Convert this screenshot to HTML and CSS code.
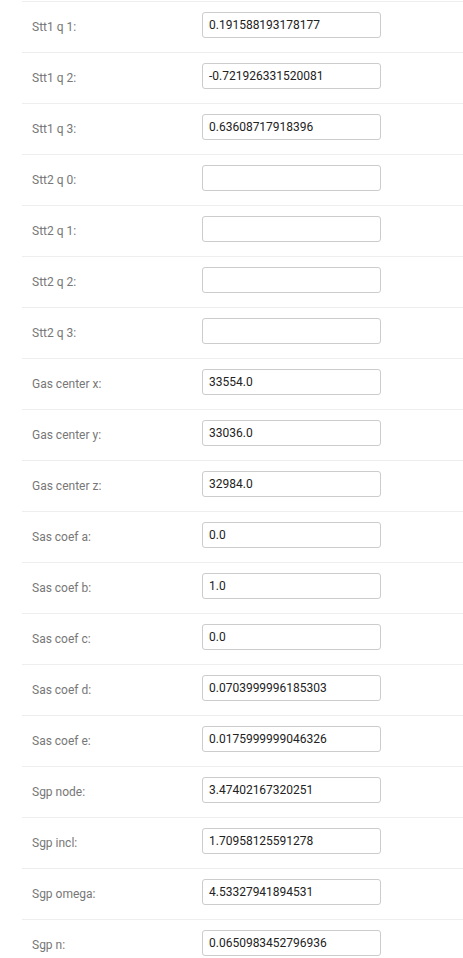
FILE: index.html
```html
<!DOCTYPE html>
<html>
<head>
<meta charset="utf-8">
<link rel="stylesheet" href="styles.css">
</head>
<body>
<div class="list">
  <div class="row"><label class="label">Stt1 q 1:</label><input class="field" type="text" value="0.191588193178177"></div>
  <div class="row"><label class="label">Stt1 q 2:</label><input class="field" type="text" value="-0.721926331520081"></div>
  <div class="row"><label class="label">Stt1 q 3:</label><input class="field" type="text" value="0.63608717918396"></div>
  <div class="row"><label class="label">Stt2 q 0:</label><input class="field" type="text" value=""></div>
  <div class="row"><label class="label">Stt2 q 1:</label><input class="field" type="text" value=""></div>
  <div class="row"><label class="label">Stt2 q 2:</label><input class="field" type="text" value=""></div>
  <div class="row"><label class="label">Stt2 q 3:</label><input class="field" type="text" value=""></div>
  <div class="row"><label class="label">Gas center x:</label><input class="field" type="text" value="33554.0"></div>
  <div class="row"><label class="label">Gas center y:</label><input class="field" type="text" value="33036.0"></div>
  <div class="row"><label class="label">Gas center z:</label><input class="field" type="text" value="32984.0"></div>
  <div class="row"><label class="label">Sas coef a:</label><input class="field" type="text" value="0.0"></div>
  <div class="row"><label class="label">Sas coef b:</label><input class="field" type="text" value="1.0"></div>
  <div class="row"><label class="label">Sas coef c:</label><input class="field" type="text" value="0.0"></div>
  <div class="row"><label class="label">Sas coef d:</label><input class="field" type="text" value="0.0703999996185303"></div>
  <div class="row"><label class="label">Sas coef e:</label><input class="field" type="text" value="0.0175999999046326"></div>
  <div class="row"><label class="label">Sgp node:</label><input class="field" type="text" value="3.47402167320251"></div>
  <div class="row"><label class="label">Sgp incl:</label><input class="field" type="text" value="1.70958125591278"></div>
  <div class="row"><label class="label">Sgp omega:</label><input class="field" type="text" value="4.53327941894531"></div>
  <div class="row"><label class="label">Sgp n:</label><input class="field" type="text" value="0.0650983452796936"></div>
</div>
</body>
</html>
```
FILE: styles.css
```css
html, body {
  margin: 0;
  padding: 0;
  background: #fff;
  font-family: Roboto, "Liberation Sans", sans-serif;
}
.list {
  padding: 1px 0 0 22px;
}
.row {
  display: flex;
  align-items: center;
  border-top: 1px solid #eeeeee;
  padding: 10px 0 14px 10px;
  height: 26px;
}
.label {
  width: 170px;
  flex: none;
  font-size: 12px;
  color: #777;
  padding-top: 4px;
}
.field {
  box-sizing: border-box;
  width: 179px;
  height: 26px;
  margin: 0;
  padding: 0 6px;
  border: 1px solid #cccccc;
  border-radius: 3px;
  font-family: Roboto, "Liberation Sans", sans-serif;
  font-size: 12px;
  color: #222;
  background: #fff;
  outline: none;
}
```
